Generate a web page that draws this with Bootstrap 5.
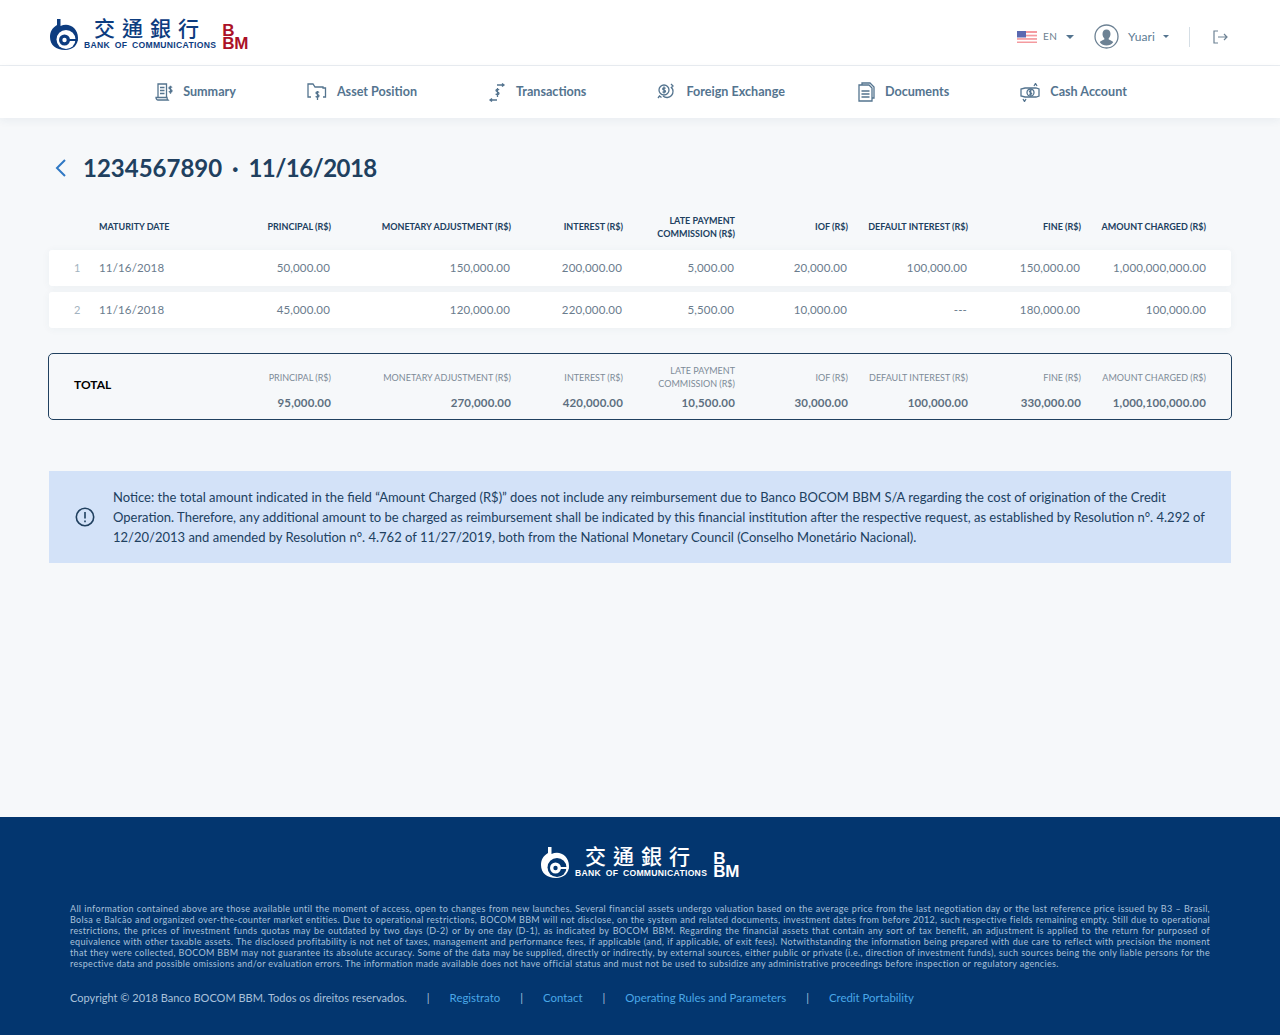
<!DOCTYPE html>
<html lang="en">
<head>
  <meta charset="UTF-8">
  <meta name="viewport" content="width=device-width, initial-scale=1.0">
  <title>BOCOM BBM</title>
  <link href="https://cdn.jsdelivr.net/npm/bootstrap@5.3.0/dist/css/bootstrap.min.css" rel="stylesheet">
  <style>
    body {
      font-family: Lato, "Liberation Sans", sans-serif;
      background-color: #f6f8fa;
      min-height: 1035px;
    }
    .top-bar {
      height: 66px;
      background: #fff;
      border-bottom: 1px solid #e9edf1;
      padding: 3px 52px 0 50px;
    }
    .brand-mark { margin-right: 6px; }
    .brand-cn {
      font-family: "Noto Sans CJK TC", sans-serif;
      font-size: 21px;
      font-weight: 500;
      line-height: 22px;
      letter-spacing: 7px;
      padding-left: 10px;
      margin-top: -3px;
      white-space: nowrap;
    }
    .brand-en {
      font-family: "Liberation Sans", sans-serif;
      font-size: 8.6px;
      line-height: 9px;
      letter-spacing: .3px;
      font-weight: 700;
      white-space: nowrap;
      word-spacing: 2px;
      margin-top: 3px;
    }
    .brand-bbm {
      font-family: "Liberation Sans", sans-serif;
      font-weight: 700;
      font-size: 17px;
      line-height: 13px;
      letter-spacing: -.3px;
      margin-left: 6px;
    }
    .brand-blue { color: #0d3c7f; }
    .brand-red { color: #ab1127; }
    .account-menu { padding-top: 5px; }
    .lang-txt { font-size: 10px; color: #6d7f8f; letter-spacing: .3px; margin-left: 6px; }
    .user-txt { font-size: 12px; color: #5c7b94; letter-spacing: .1px; margin-left: 9px; }
    .caret-down {
      width: 0; height: 0;
      margin-left: 9px;
      border-left: 4.5px solid transparent;
      border-right: 4.5px solid transparent;
      border-top: 4.5px solid #54748f;
    }
    .caret-small { border-left-width: 3.5px; border-right-width: 3.5px; border-top-width: 3.5px; margin-left: 8px; }
    .user-pic { margin-left: 20px; }
    .top-sep { width: 1px; height: 20px; background: #d5dee5; margin: 0 23px 0 20px; }
    .main-nav {
      height: 52px;
      background: #fff;
      gap: 71px;
      padding-left: 2px;
      box-shadow: 0 3px 8px rgba(40, 70, 100, .06);
    }
    .main-nav a {
      color: #54748f;
      font-size: 12.6px;
      font-weight: 700;
      text-decoration: none;
      gap: 10px;
    }
    .main-nav a.nav-wide { margin-right: 2px; }
    .main-nav svg { fill: none; stroke: #54748f; stroke-width: 1.3; }
    .back-arrow { margin: 0 15px 0 5px; }
    .page-title {
      color: #20405f;
      font-size: 24px;
      line-height: 30px;
      font-weight: 700;
      margin: 0;
      word-spacing: 4px;
    }
    .title-date { letter-spacing: -.55px; }
    .title-row { margin-top: -1px; }
    .content-wrap { padding: 36px 49px 0; }
    .bond-grid {
      display: grid;
      grid-template-columns: 25px 120px 112px 180px 112px 112px 113px 120px 113px 125px;
      padding: 0 25px;
      align-items: center;
      text-align: right;
    }
    .head-row {
      margin-top: 26px;
      margin-bottom: 6px;
      height: 35px;
      color: #20405f;
      font-size: 9px;
      line-height: 13px;
      font-weight: 700;
      text-transform: uppercase;
    }
    .data-row {
      height: 36px;
      margin-top: 6px;
      background: #fff;
      border-radius: 3px;
      box-shadow: 0 1px 8px rgba(40, 70, 100, .05);
      color: #6a7c8d;
      font-size: 11.5px;
      letter-spacing: .15px;
    }
    .head-row + .data-row { margin-top: 0; }
    .data-row span { padding-right: 1px; }
    .data-row span:last-child { padding-right: 0; }
    .col-no { text-align: left; color: #a3b3c0; font-size: 11px; }
    .col-date { text-align: left; }
    .total-box {
      margin: 25px -1px 0;
      height: 67px;
      border: 1px solid #20405f;
      border-radius: 5px;
      padding: 10px 25px 0;
      align-content: start;
      row-gap: 6px;
    }
    .total-label {
      grid-column: 1 / 3;
      grid-row: 1 / 3;
      text-align: left;
      margin-bottom: 4px;
      font-size: 12px;
      font-weight: 700;
      color: #000;
    }
    .total-head {
      font-size: 9px;
      line-height: 13px;
      color: #7d8b98;
      text-transform: uppercase;
    }
    .total-val { font-size: 11.5px; line-height: 13px; font-weight: 700; color: #5d6f80; letter-spacing: .15px; }
    .total-first { grid-column: 3; }
    .notice-box {
      margin-top: 51px;
      height: 92px;
      background: #d3e2f8;
      padding: 0 26px;
      gap: 18px;
      color: #20405f;
      font-size: 13px;
      line-height: 20px;
    }
    .notice-box svg { flex: 0 0 20px; }
    .site-footer {
      height: 218px;
      margin-top: auto;
      background: #03366f;
      padding: 30px 70px 0;
    }
    .legal-txt {
      font-size: 9px;
      line-height: 11px;
      color: #a9c1da;
      text-align: justify;
      letter-spacing: .33px;
      margin: 25px 0 0;
    }
    .foot-links {
      margin-top: 20px;
      font-size: 11px;
      color: #a9c1da;
      gap: 20px;
    }
    .foot-links a { color: #4aa8e8; font-size: 11.4px; text-decoration: none; }
  </style>
</head>
<body class="d-flex flex-column">

  <header class="top-bar d-flex align-items-center justify-content-between">
    <div class="d-flex brand-blue">
      <svg class="brand-mark" width="28" height="31" viewBox="0 0 28 31">
        <path fill="#0d3c7f" d="M7 0h3.500v7C18 3 28 8 28 19c0 7-5 12-13 12C6 31 0 26 0 18c0-5 2-9 7-12z"/>
        <circle cx="16" cy="20.500" r="9.500" fill="#fff"/>
        <circle cx="14.500" cy="21" r="5.500" fill="#0d3c7f"/>
        <circle cx="14.500" cy="21" r="2.200" fill="#fff"/>
        <rect x="18" y="20" width="9.500" height="2" fill="#0d3c7f"/>
      </svg>
      <div>
        <div class="brand-cn">交通銀行</div>
        <div class="brand-en">BANK OF COMMUNICATIONS</div>
      </div>
      <div class="brand-bbm brand-red align-self-end">B<br>BM</div>
    </div>
    <div class="account-menu d-flex align-items-center">
      <svg width="20" height="12" viewBox="0 0 20 12">
        <rect width="20" height="12" fill="#f49a9f"/>
        <rect y="2" width="20" height="1.700" fill="#fff"/><rect y="5.400" width="20" height="1.700" fill="#fff"/><rect y="8.800" width="20" height="1.700" fill="#fff"/>
        <rect width="9" height="6.500" fill="#5a68b0"/>
      </svg>
      <span class="lang-txt">EN</span>
      <span class="caret-down"></span>
      <svg class="user-pic" width="25" height="25" viewBox="0 0 25 25">
        <circle cx="12.500" cy="12.500" r="11.500" fill="#fff" stroke="#6d8294" stroke-width="1.300"/>
        <path fill="#6d8294" d="M12.500 5.500c2.600 0 4 2 4 4.500 0 1.800-.8 3.300-1.800 4.200v1.300c1.800.7 3.600 1.500 4.500 2.700A9 9 0 0 1 12.500 21.500 9 9 0 0 1 5.800 18.200c.9-1.200 2.700-2 4.500-2.700v-1.300C9.300 13.300 8.500 11.800 8.500 10c0-2.500 1.400-4.500 4-4.500z"/>
      </svg>
      <span class="user-txt">Yuari</span>
      <span class="caret-down caret-small"></span>
      <span class="top-sep"></span>
      <svg width="15" height="14" viewBox="0 0 15 14" fill="none" stroke="#6d8294" stroke-width="1.200">
        <path d="M5 1H1v12h4M5 7h9M11 4l3 3-3 3"/>
      </svg>
    </div>
  </header>

  <nav class="main-nav d-flex justify-content-center align-items-center">
    <a href="#" class="d-flex align-items-center">
      <svg width="18" height="18" viewBox="0 0 18 18"><path d="M3 14.500V1h8.500v13.500zM1 14.500h11c0 1.500 1 2.500 1 2.500H3c-1 0-2-1-2-2.500zM5 4.500h4.500M5 7.500h4.500M5 10.500h4.500"/><path d="M17 4.500c-.5-1-3-1-3 .5s3 1 3 2.800-2.600 1.600-3 .4M15.500 2.800v8"/></svg>
      Summary
    </a>
    <a href="#" class="d-flex align-items-center">
      <svg width="20" height="19" viewBox="0 0 20 19"><path d="M4 14H1V1h5l2 3h8v1h2.500v9H16"/><path d="M12 9.500c-.5-1-3-1-3 .5s3 1 3 2.800-2.800 1.600-3.200.4M10.500 8v9"/></svg>
      Asset Position
    </a>
    <a href="#" class="d-flex align-items-center">
      <svg width="18" height="19" viewBox="0 0 18 19"><path d="M9 2h7M14 .5 16 2l-2 1.500M9 17H2M4 15.500 2 17l2 1.500"/><path d="M11 7c-.5-1-3-1-3 .5s3 1 3 2.800-2.800 1.600-3.200.4M9.500 5v9"/></svg>
      Transactions
    </a>
    <a href="#" class="nav-wide d-flex align-items-center">
      <svg width="19" height="19" viewBox="0 0 19 19"><circle cx="7" cy="7" r="5"/><path d="M14 4a6 6 0 1 1-8 9"/><path d="M8.500 5.500c-.4-.8-2.800-.8-2.800.5s2.800 1 2.800 2.300-2.500 1.300-2.800.3M7 3.500v7M14 1l2 2-2 2M1 15l1.500-2 2 1.500"/></svg>
      Foreign Exchange
    </a>
    <a href="#" class="d-flex align-items-center">
      <svg width="17" height="20" viewBox="0 0 17 20"><path d="M1 3h10l3 3v13H1z"/><path d="M4 3V1h8l4 4v11h-2"/><path d="M3.500 9h8M3.500 12h8M3.500 15h8"/></svg>
      Documents
    </a>
    <a href="#" class="d-flex align-items-center">
      <svg width="20" height="19" viewBox="0 0 20 19"><path d="M5 5h11l3 1v7l-3 1H5l-4-1V6z"/><circle cx="10.500" cy="9.500" r="3.500"/><path d="M11.700 8.200c-.4-.6-2.300-.6-2.300.4s2.300.8 2.300 1.800-2 1-2.300.3M10.500 6.500v6M14 3l1.500-2.500L17 3M3 16l1.500 2.500L6 16"/></svg>
      Cash Account
    </a>
  </nav>

  <main class="content-wrap">
    <div class="title-row d-flex align-items-center">
      <svg class="back-arrow" width="14" height="18" viewBox="0 0 14 18" fill="none" stroke="#2f78c4" stroke-width="2"><path d="M11 1 3 9l8 8"/></svg>
      <h1 class="page-title">1234567890 · <span class="title-date">11/16/2018</span></h1>
    </div>

    <div class="bond-grid head-row">
      <span></span><span class="col-date">Maturity Date</span>
      <span>Principal (R$)</span><span>Monetary Adjustment (R$)</span><span>Interest (R$)</span>
      <span>Late Payment<br>Commission (R$)</span><span>IOF (R$)</span><span>Default Interest (R$)</span>
      <span>Fine (R$)</span><span>Amount Charged (R$)</span>
    </div>
    <div class="bond-grid data-row">
      <span class="col-no">1</span><span class="col-date">11/16/2018</span>
      <span>50,000.00</span><span>150,000.00</span><span>200,000.00</span><span>5,000.00</span>
      <span>20,000.00</span><span>100,000.00</span><span>150,000.00</span><span>1,000,000,000.00</span>
    </div>
    <div class="bond-grid data-row">
      <span class="col-no">2</span><span class="col-date">11/16/2018</span>
      <span>45,000.00</span><span>120,000.00</span><span>220,000.00</span><span>5,500.00</span>
      <span>10,000.00</span><span>---</span><span>180,000.00</span><span>100,000.00</span>
    </div>

    <div class="bond-grid total-box">
      <span class="total-label">TOTAL</span>
      <div class="total-head">Principal (R$)</div>
      <div class="total-head">Monetary Adjustment (R$)</div>
      <div class="total-head">Interest (R$)</div>
      <div class="total-head">Late Payment<br>Commission (R$)</div>
      <div class="total-head">IOF (R$)</div>
      <div class="total-head">Default Interest (R$)</div>
      <div class="total-head">Fine (R$)</div>
      <div class="total-head">Amount Charged (R$)</div>
      <span class="total-val total-first">95,000.00</span>
      <span class="total-val">270,000.00</span>
      <span class="total-val">420,000.00</span>
      <span class="total-val">10,500.00</span>
      <span class="total-val">30,000.00</span>
      <span class="total-val">100,000.00</span>
      <span class="total-val">330,000.00</span>
      <span class="total-val">1,000,100,000.00</span>
    </div>

    <div class="notice-box d-flex align-items-center">
      <svg width="20" height="20" viewBox="0 0 20 20" fill="none" stroke="#20405f" stroke-width="1.600">
        <circle cx="10" cy="10" r="8.700"/><path d="M10 5v6.500M10 13.500v1.800"/>
      </svg>
      <div>Notice: the total amount indicated in the field “Amount Charged (R$)” does not include any reimbursement due to Banco BOCOM BBM S/A regarding the cost of origination of the Credit Operation. Therefore, any additional amount to be charged as reimbursement shall be indicated by this financial institution after the respective request, as established by Resolution n°. 4.292 of 12/20/2013 and amended by Resolution n°. 4.762 of 11/27/2019, both from the National Monetary Council (Conselho Monetário Nacional).</div>
    </div>
  </main>

  <footer class="site-footer">
    <div class="d-flex justify-content-center text-white">
      <svg class="brand-mark" width="28" height="31" viewBox="0 0 28 31">
        <path fill="#fff" d="M7 0h3.500v7C18 3 28 8 28 19c0 7-5 12-13 12C6 31 0 26 0 18c0-5 2-9 7-12z"/>
        <circle cx="16" cy="20.500" r="9.500" fill="#03366f"/>
        <circle cx="14.500" cy="21" r="5.500" fill="#fff"/>
        <circle cx="14.500" cy="21" r="2.200" fill="#03366f"/>
        <rect x="18" y="20" width="9.500" height="2" fill="#fff"/>
      </svg>
      <div>
        <div class="brand-cn">交通銀行</div>
        <div class="brand-en">BANK OF COMMUNICATIONS</div>
      </div>
      <div class="brand-bbm align-self-end">B<br>BM</div>
    </div>
    <p class="legal-txt">All information contained above are those available until the moment of access, open to changes from new launches. Several financial assets undergo valuation based on the average price from the last negotiation day or the last reference price issued by B3 – Brasil, Bolsa e Balcão and organized over-the-counter market entities. Due to operational restrictions, BOCOM BBM will not disclose, on the system and related documents, investment dates from before 2012, such respective fields remaining empty. Still due to operational restrictions, the prices of investment funds quotas may be outdated by two days (D-2) or by one day (D-1), as indicated by BOCOM BBM. Regarding the financial assets that contain any sort of tax benefit, an adjustment is applied to the return for purposed of equivalence with other taxable assets. The disclosed profitability is not net of taxes, management and performance fees, if applicable (and, if applicable, of exit fees). Notwithstanding the information being prepared with due care to reflect with precision the moment that they were collected, BOCOM BBM may not guarantee its absolute accuracy. Some of the data may be supplied, directly or indirectly, by external sources, either public or private (i.e., direction of investment funds), such sources being the only liable persons for the respective data and possible omissions and/or evaluation errors. The information made available does not have official status and must not be used to subsidize any administrative proceedings before inspection or regulatory agencies.</p>
    <div class="foot-links d-flex align-items-baseline">
      <span>Copyright © 2018 Banco BOCOM BBM. Todos os direitos reservados.</span><span>|</span>
      <a href="#">Registrato</a><span>|</span>
      <a href="#">Contact</a><span>|</span>
      <a href="#">Operating Rules and Parameters</a><span>|</span>
      <a href="#">Credit Portability</a>
    </div>
  </footer>

  <script src="https://cdn.jsdelivr.net/npm/bootstrap@5.3.0/dist/js/bootstrap.bundle.min.js"></script>
</body>
</html>
